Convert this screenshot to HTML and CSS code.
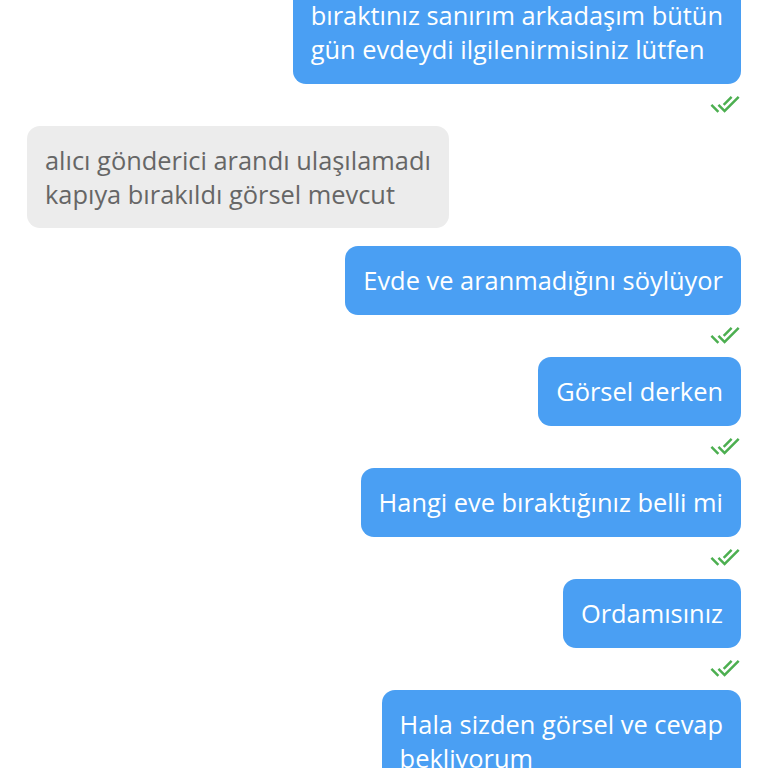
FILE: index.html
```html
<!DOCTYPE html>
<html lang="tr">
<head>
    <meta charset="UTF-8">
    <meta name="viewport" content="width=device-width, initial-scale=1.0">
    <title>Mesajlar</title>
    <link rel="stylesheet" href="styles.css">
</head>
<body>

<div class="chat">
    <div class="bubble out">bıraktınız sanırım arkadaşım bütün<br>gün evdeydi ilgilenirmisiniz lütfen</div>
    <div class="ticks"><svg viewBox="0 4 24 16" width="30" height="20"><path d="M18 7l-1.41-1.41-6.34 6.34 1.41 1.41L18 7zm4.24-1.41L11.66 16.17 7.48 12l-1.41 1.41L11.66 19l12-12-1.42-1.41zM.41 13.41L6 19l1.41-1.41L1.83 12 .41 13.41z"/></svg></div>

    <div class="bubble in">alıcı gönderici arandı ulaşılamadı<br>kapıya bırakıldı görsel mevcut</div>

    <div class="bubble out">Evde ve aranmadığını söylüyor</div>
    <div class="ticks"><svg viewBox="0 4 24 16" width="30" height="20"><path d="M18 7l-1.41-1.41-6.34 6.34 1.41 1.41L18 7zm4.24-1.41L11.66 16.17 7.48 12l-1.41 1.41L11.66 19l12-12-1.42-1.41zM.41 13.41L6 19l1.41-1.41L1.83 12 .41 13.41z"/></svg></div>

    <div class="bubble out">Görsel derken</div>
    <div class="ticks"><svg viewBox="0 4 24 16" width="30" height="20"><path d="M18 7l-1.41-1.41-6.34 6.34 1.41 1.41L18 7zm4.24-1.41L11.66 16.17 7.48 12l-1.41 1.41L11.66 19l12-12-1.42-1.41zM.41 13.41L6 19l1.41-1.41L1.83 12 .41 13.41z"/></svg></div>

    <div class="bubble out">Hangi eve bıraktığınız belli mi</div>
    <div class="ticks"><svg viewBox="0 4 24 16" width="30" height="20"><path d="M18 7l-1.41-1.41-6.34 6.34 1.41 1.41L18 7zm4.24-1.41L11.66 16.17 7.48 12l-1.41 1.41L11.66 19l12-12-1.42-1.41zM.41 13.41L6 19l1.41-1.41L1.83 12 .41 13.41z"/></svg></div>

    <div class="bubble out">Ordamısınız</div>
    <div class="ticks"><svg viewBox="0 4 24 16" width="30" height="20"><path d="M18 7l-1.41-1.41-6.34 6.34 1.41 1.41L18 7zm4.24-1.41L11.66 16.17 7.48 12l-1.41 1.41L11.66 19l12-12-1.42-1.41zM.41 13.41L6 19l1.41-1.41L1.83 12 .41 13.41z"/></svg></div>

    <div class="bubble out">Hala sizden görsel ve cevap<br>bekliyorum</div>
</div>

</body>
</html>
```

FILE: styles.css
```css
/* Chat screen */
html, body {
    height: 100%;
}

body {
    font-family: "Open Sans", "Noto Sans", sans-serif;
    background: #ffffff;
    margin: 0;
    padding: 0;
    overflow: hidden;
}

.chat {
    display: flex;
    flex-direction: column;
    padding: 0 27px;
    margin-top: -19px; /* list is scrolled, first bubble cut off */
}

.bubble {
    font-size: 25.4px;
    line-height: 34px;
    padding: 17px 18px 18px;
    border-radius: 13px;
    white-space: nowrap;
}

.out {
    align-self: flex-end;
    background-color: #4a9ff3;
    color: #ffffff;
}

.in {
    align-self: flex-start;
    background-color: #ececec;
    color: #666666;
    margin-bottom: 18px;
    padding: 17px 18px;
}

.ticks {
    align-self: flex-end;
    height: 42px;
    display: flex;
    align-items: center;
    margin-right: 1px;
    padding-bottom: 3px;
    box-sizing: border-box;
}

.ticks svg {
    fill: #4caf50;
}
```
